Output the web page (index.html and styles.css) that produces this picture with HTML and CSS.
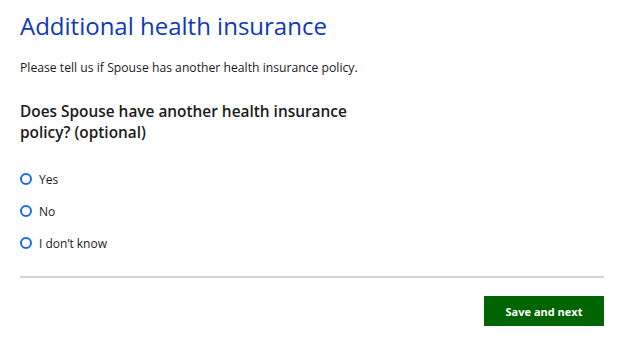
FILE: index.html
```html
<!DOCTYPE html>
<html lang="en">
<head>
  <meta charset="UTF-8" />
  <meta name="viewport" content="width=device-width, initial-scale=1.0" />
  <title>Additional health insurance</title>
  <link rel="stylesheet" href="styles.css">
</head>
<body>
  <div class="page">
    <h1 class="title">Additional health insurance</h1>
    <p class="intro">Please tell us if Spouse has another health insurance policy.</p>
    <fieldset class="question">
      <legend class="question-label">Does Spouse have another health insurance policy? (optional)</legend>
      <div class="options">
        <label class="option"><span class="radio"></span>Yes</label>
        <label class="option"><span class="radio"></span>No</label>
        <label class="option"><span class="radio"></span>I don’t know</label>
      </div>
    </fieldset>
    <div class="divider"></div>
    <div class="actions">
      <button class="next-btn">Save and next</button>
    </div>
  </div>
</body>
</html>
```

FILE: styles.css
```css
body {
  margin: 0;
  font-family: 'Open Sans', 'Noto Sans', sans-serif;
  background-color: #fff;
  color: #1b1b1b;
}
.page {
  padding: 11px 20px 0 20px;
}
.title {
  margin: 0;
  font-size: 24px;
  line-height: 30px;
  font-weight: 400;
  color: #1038b8;
}
.intro {
  margin: 18px 0 0 0;
  font-size: 12.2px;
  line-height: 18px;
}
.question {
  margin: 24px 0 0 0;
  padding: 0;
  border: none;
}
.question-label {
  padding: 0;
  width: 350px;
  font-size: 15.4px;
  line-height: 21px;
  font-weight: 600;
}
.options {
  display: flex;
  flex-direction: column;
  gap: 12px;
  margin-top: 26px;
}
.option {
  display: flex;
  align-items: center;
  gap: 7px;
  height: 20px;
  font-size: 12px;
}
.radio {
  width: 8px;
  height: 8px;
  border: 2px solid #1a6be0;
  border-radius: 50%;
}
.divider {
  margin-top: 23px;
  height: 2px;
  background-color: #d4d4d4;
}
.actions {
  display: flex;
  justify-content: flex-end;
  margin-top: 18px;
}
.next-btn {
  width: 120px;
  height: 30px;
  border: none;
  background-color: #006400;
  color: #fff;
  font-family: 'Open Sans', 'Noto Sans', sans-serif;
  font-size: 11px;
  font-weight: 700;
  cursor: pointer;
}
```
